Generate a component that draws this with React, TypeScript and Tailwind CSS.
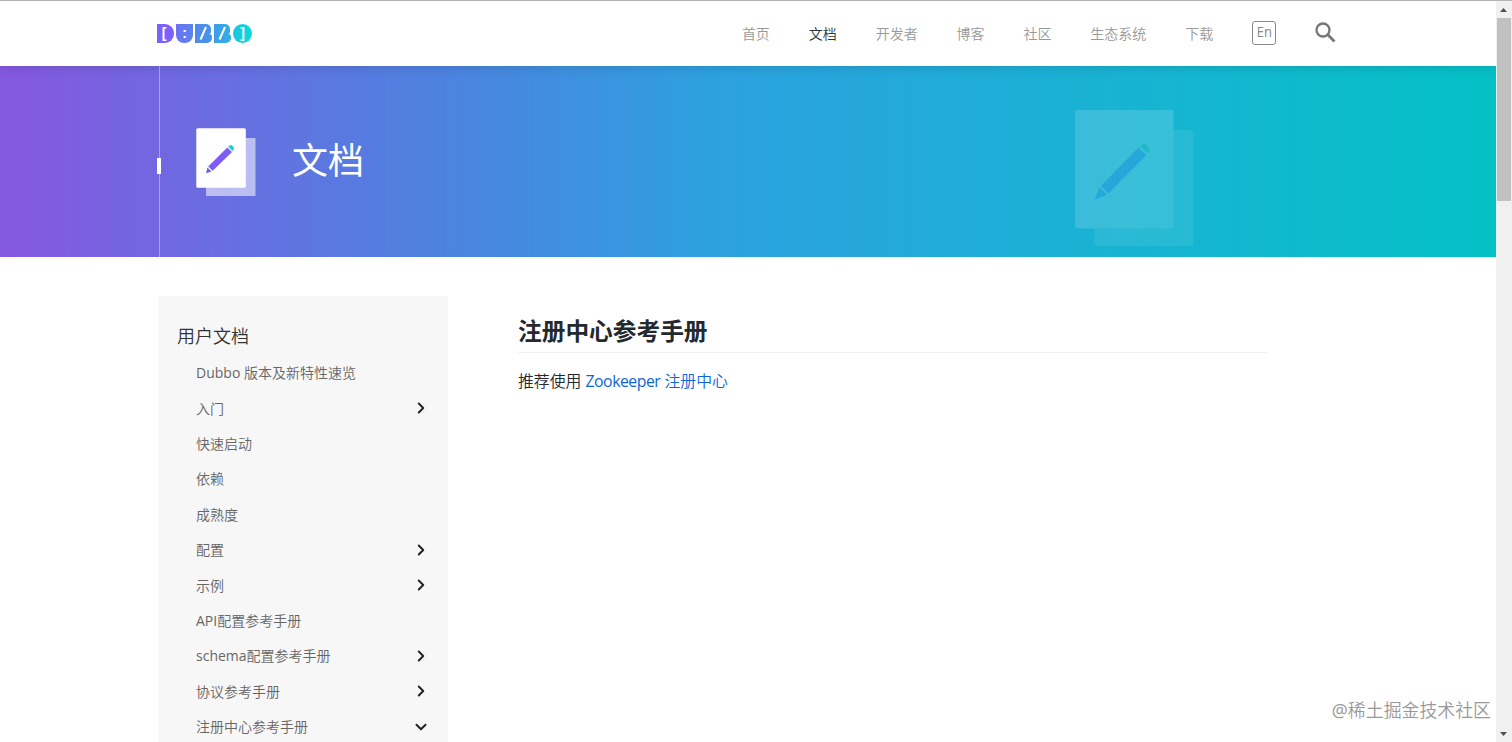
import { ChevronDown, ChevronRight } from 'lucide-react';

const navItems = ['首页', '文档', '开发者', '博客', '社区', '生态系统', '下载'];

const menuItems: { prefix?: string; label: string; state?: 'closed' | 'open' }[] = [
  { prefix: 'Dubbo ', label: '版本及新特性速览' },
  { label: '入门', state: 'closed' },
  { label: '快速启动' },
  { label: '依赖' },
  { label: '成熟度' },
  { label: '配置', state: 'closed' },
  { label: '示例', state: 'closed' },
  { prefix: 'API', label: '配置参考手册' },
  { prefix: 'schema', label: '配置参考手册', state: 'closed' },
  { label: '协议参考手册', state: 'closed' },
  { label: '注册中心参考手册', state: 'open' },
];

function Logo() {
  const tile =
    "flex h-[19px] items-center justify-center font-['Liberation_Sans',sans-serif] text-[14px] font-bold leading-none text-white";
  return (
    <div className="flex gap-[2px]">
      <span className={`${tile} w-[17px] rounded-r-[9px] bg-[#7b61fb] pr-[3px] pb-[2px]`}>[</span>
      <span className={`${tile} w-[17px] rounded-b-[8px] bg-linear-to-r from-[#6c71f3] to-[#5a84ee] pb-[2px]`}>:</span>
      <span className="relative flex w-[17px] flex-col">
        <span className="h-[9.5px] w-[15.5px] rounded-tr-[5px] rounded-br-[2px] bg-linear-to-r from-[#5388ea] to-[#4596e8]" />
        <span className="h-[9.5px] w-[17px] rounded-tr-[3px] rounded-br-[5px] bg-linear-to-r from-[#5388ea] to-[#4596e8]" />
        <svg className="absolute inset-0" width="17" height="19" viewBox="0 0 17 19">
          <path d="M5.5 15.5 11 3" stroke="#fff" strokeWidth="2" />
        </svg>
      </span>
      <span className="relative flex w-[17px] flex-col">
        <span className="h-[9.5px] w-[15.5px] rounded-tr-[5px] rounded-br-[2px] bg-linear-to-r from-[#3f9ce6] to-[#2fb0e3]" />
        <span className="h-[9.5px] w-[17px] rounded-tr-[3px] rounded-br-[5px] bg-linear-to-r from-[#3f9ce6] to-[#2fb0e3]" />
        <svg className="absolute inset-0" width="17" height="19" viewBox="0 0 17 19">
          <path d="M5.5 15.5 11 3" stroke="#fff" strokeWidth="2" />
        </svg>
      </span>
      <span className={`${tile} w-[19px] rounded-full bg-linear-to-r from-[#1cc3e0] to-[#06dbd9] pb-[2px]`}>]</span>
    </div>
  );
}

function DocIcon() {
  return (
    <svg width="60" height="68" viewBox="0 0 60 68">
      <rect x="10" y="10" width="49.5" height="58" rx="1" fill="#fff" fillOpacity="0.55" />
      <rect x="0.3" y="0.3" width="49.5" height="59.5" rx="1.5" fill="#fff" />
      <path d="M12.2 38.4 31.3 19.6 36 24.1 16.7 42.8Z" fill="#7e5df7" />
      <path d="M32.2 18.7 33.7 17.4Q35 16.6 36.4 17.8L37.5 19Q38.4 20 37.6 21.2L36.8 23.1Z" fill="#1fcbd0" />
      <path d="M11.4 39.4 15.5 43.6 10 45.2Z" fill="#6f5fe8" />
    </svg>
  );
}

function DocWatermark() {
  return (
    <svg width="119" height="136" viewBox="0 0 119 136">
      <path d="M98.5 20H117Q118.5 20 118.5 21.5V134.5Q118.5 136 117 136H21Q19.5 136 19.5 134.5V118.5H98.5Z" fill="#fff" fillOpacity="0.08" />
      <rect x="0" y="0" width="98.5" height="118.5" rx="2" fill="#fff" fillOpacity="0.15" />
      <path d="M26 75.8 63.5 37.8 71.3 45.3 33.3 83.5Z" fill="#25a7da" />
      <path d="M65.5 36 68.5 34Q69.7 33.6 70.7 34.6L74.2 38.6Q74.9 40 73.8 41.4L72.4 43Z" fill="#1bb8c6" />
      <path d="M24.7 77.6 31.8 84.8 19.4 89.8Z" fill="#25a7da" />
    </svg>
  );
}

function Header() {
  return (
    <header className="relative z-10 flex h-[66px] items-center justify-between border-t border-[#b4b4b4] bg-white pl-[157px] pr-[160px] shadow-[0_2px_10px_rgba(0,0,0,0.12)]">
      <Logo />
      <nav className="flex items-center gap-[38.9px] text-[14px] font-[350] text-[#999]">
        {navItems.map((item) => (
          <span key={item} className={item === '文档' ? 'text-[#333]' : ''}>
            {item}
          </span>
        ))}
        <span className="-mt-px flex h-6 w-6 items-center justify-center rounded-[3px] border border-[#8a8a8a] text-[14.5px] font-normal leading-none text-[#888]">
          <span className="-mt-px scale-x-90">En</span>
        </span>
        <svg width="21" height="21" viewBox="0 0 21 21" className="-mt-[3px] text-[#777]">
          <circle cx="8" cy="8" r="6.5" fill="none" stroke="currentColor" strokeWidth="2.3" />
          <path d="M12.6 12.6 19.5 19.5" stroke="currentColor" strokeWidth="2.8" />
        </svg>
      </nav>
    </header>
  );
}

function Banner() {
  return (
    <section className="relative flex h-[191px] justify-between bg-[linear-gradient(to_right,#8558e0_0%,#7168e0_11%,#5b78e0_22%,#4788e0_33%,#2ca1df_48%,#18b3d3_75%,#05c1c6_100%)] pl-[159px]">
      <div className="flex border-l border-white/40 pl-9 pt-[62px]">
        <DocIcon />
        <h1 className="ml-[36px] mt-[6px] text-[36px] font-normal leading-[54px] text-white">文档</h1>
      </div>
      <div className="pr-[302px] pt-[44px]">
        <DocWatermark />
      </div>
      <span className="absolute left-[157px] top-[92px] h-4 w-1 bg-white" />
    </section>
  );
}

function Sidebar() {
  return (
    <aside className="h-[446px] w-[290px] shrink-0 bg-[#f7f7f7] pl-[19px] pr-[18px] pt-[25px]">
      <h2 className="text-[18px] font-[350] leading-[30px] text-[#333]">用户文档</h2>
      <ul className="mt-[4px] pl-[19px] text-[14px] font-[350] text-[#666]">
        {menuItems.map((item) => (
          <li key={item.label + item.prefix} className="flex h-[35.4px] items-center justify-between">
            <span className="whitespace-pre">
              {item.prefix && <span className="font-normal">{item.prefix}</span>}
              {item.label}
            </span>
            {item.state === 'closed' && <ChevronRight className="h-[18px] w-[18px] text-[#222]" strokeWidth={2.6} />}
            {item.state === 'open' && <ChevronDown className="h-[18px] w-[18px] text-[#222]" strokeWidth={2.6} />}
          </li>
        ))}
      </ul>
    </aside>
  );
}

function Scrollbar() {
  return (
    <div className="flex h-full w-4 shrink-0 flex-col items-center border-t border-[#b4b4b4] bg-[#f0f0f0]">
      <svg width="16" height="17" viewBox="0 0 16 17">
        <path d="M4 11 7.5 7 11 11Z" fill="#505050" />
      </svg>
      <div className="h-[183px] w-[14px] bg-[#c1c1c1]" />
      <svg width="16" height="17" viewBox="0 0 16 17" className="mt-auto">
        <path d="M4 7 7.5 11 11 7Z" fill="#505050" />
      </svg>
    </div>
  );
}

export default function App() {
  return (
    <div className="relative flex h-[742px] w-[1512px] overflow-hidden bg-white font-['Open_Sans','Noto_Sans_CJK_SC',sans-serif]">
      <div className="min-w-0 flex-1 overflow-hidden">
        <Header />
        <Banner />
        <div className="flex pl-[158px] pt-[39px]">
          <Sidebar />
          <main className="ml-[70px] w-[750px] pt-[15px]">
            <h2 className="h-[42px] border-b border-[#f0f1f2] text-[23.7px] font-bold leading-[41px] text-[#24292e]">
              注册中心参考手册
            </h2>
            <p className="mt-[16px] text-[15.85px] font-[350] leading-[24px] text-[#24292e]">
              推荐使用{' '}
              <a className="text-[#0f66d6]">
                <span className="font-normal tracking-[-0.5px]">Zookeeper</span> 注册中心
              </a>
            </p>
          </main>
        </div>
      </div>
      <Scrollbar />
      <div className="absolute bottom-[18px] right-[21px] whitespace-nowrap text-[17.9px] leading-[28px] font-[350] text-[#999] [text-shadow:1px_1px_0_#fff]">
        <span className="font-normal">@</span>稀土掘金技术社区
      </div>
    </div>
  );
}
